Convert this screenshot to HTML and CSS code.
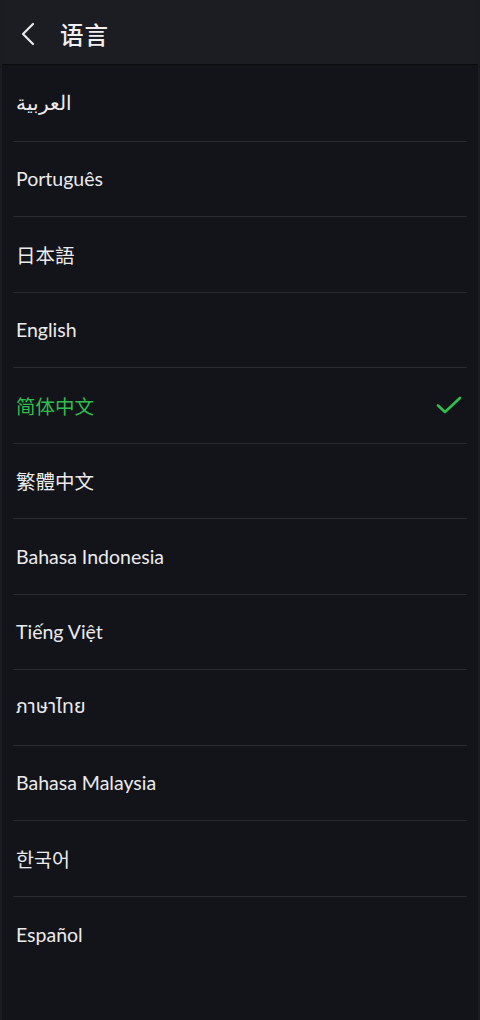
FILE: index.html
```html
<!DOCTYPE html>
<html lang="zh">
<head>
<meta charset="utf-8">
<link rel="stylesheet" href="styles.css">
</head>
<body>
<div class="page">
  <header class="bar">
    <svg class="back" width="16" height="24" viewBox="0 0 16 24"><path d="M13 2 L3 12 L13 22" fill="none" stroke="#e8e8ea" stroke-width="2.2" stroke-linecap="round" stroke-linejoin="round"/></svg>
    <h1 class="title">语言</h1>
  </header>
  <ul class="list">
    <li class="item"><span>العربية</span></li>
    <li class="item"><span>Português</span></li>
    <li class="item"><span>日本語</span></li>
    <li class="item"><span>English</span></li>
    <li class="item active"><span>简体中文</span>
      <svg class="check" width="26" height="20" viewBox="0 0 26 20"><path d="M2 10.5 L9 17 L24 3" fill="none" stroke="#2fbf4f" stroke-width="2.6" stroke-linecap="round" stroke-linejoin="round"/></svg>
    </li>
    <li class="item"><span>繁體中文</span></li>
    <li class="item"><span>Bahasa Indonesia</span></li>
    <li class="item"><span>Tiếng Việt</span></li>
    <li class="item"><span>ภาษาไทย</span></li>
    <li class="item"><span>Bahasa Malaysia</span></li>
    <li class="item"><span>한국어</span></li>
    <li class="item last"><span>Español</span></li>
  </ul>
</div>
</body>
</html>
```

FILE: styles.css
```css
html, body {
  margin: 0;
  padding: 0;
  background: #131419;
}
.page {
  width: 480px;
  height: 1020px;
  overflow: hidden;
  background: #131419;
  font-family: "Lato", "Noto Sans", "Noto Sans CJK SC", sans-serif;
  color: #ebebed;
  box-sizing: border-box;
  border-left: 2px solid #1b1c21;
  border-right: 2px solid #1b1c21;
}
.bar {
  height: 65px;
  box-sizing: border-box;
  background: #1c1d23;
  display: flex;
  align-items: center;
  padding-left: 20px;
  padding-top: 3px;
  border-bottom: 1px solid #0b0b0e;
  margin: 0 -2px;
}
.back {
  display: block;
}
.title {
  margin: 0 0 0 24px;
  font-size: 23.5px;
  font-weight: 500;
  font-family: "Noto Sans CJK SC", sans-serif;
  color: #f0f0f2;
  letter-spacing: 1px;
}
.list {
  list-style: none;
  margin: 1px 0 0;
  padding: 0 11px;
}
.item {
  height: 75.5px;
  box-sizing: border-box;
  border-bottom: 1px solid #2a2b31;
  display: flex;
  align-items: center;
  justify-content: space-between;
  padding: 0 3px 0 3px;
  font-size: 19.5px;
}
.item.last {
  border-bottom: none;
}
.item span {
  font-family: "Lato", "Noto Sans", "Noto Sans Thai", "Noto Sans CJK SC", "Noto Sans CJK KR", sans-serif;
}
.item.active {
  color: #2fbf4f;
}
.check {
  display: block;
  margin-right: 2px;
}
```
